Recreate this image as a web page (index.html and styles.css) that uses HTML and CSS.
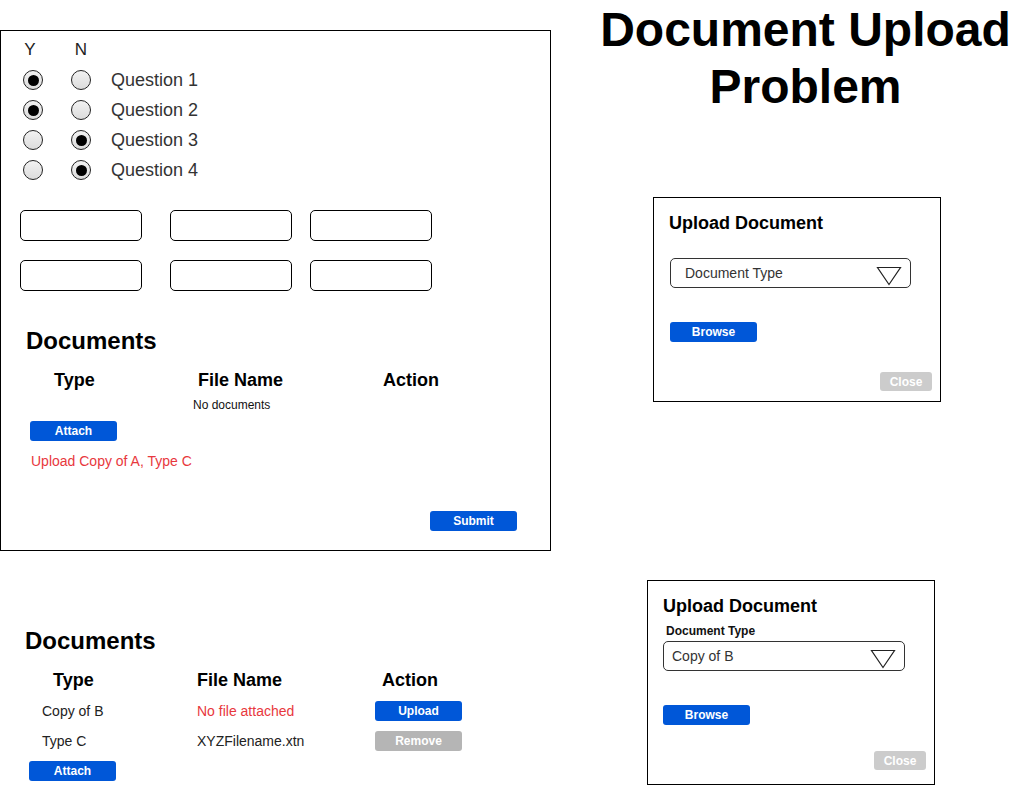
FILE: index.html
```html
<!DOCTYPE html>
<html>
<head>
<meta charset="utf-8">
<link rel="stylesheet" href="styles.css">
</head>
<body>
<div class="canvas">

  <section class="form-panel">
    <div class="questions">
      <span class="col-head col-y">Y</span><span class="col-head">N</span><span></span>
      <span class="radio on"></span><span class="radio"></span><span class="q">Question 1</span>
      <span class="radio on"></span><span class="radio"></span><span class="q">Question 2</span>
      <span class="radio"></span><span class="radio on"></span><span class="q">Question 3</span>
      <span class="radio"></span><span class="radio on"></span><span class="q">Question 4</span>
    </div>

    <div class="fields">
      <span class="field"></span><span class="field"></span><span class="field"></span>
      <span class="field"></span><span class="field"></span><span class="field"></span>
    </div>

    <div class="docs">
      <h2 class="docs-title">Documents</h2>
      <div class="doc-table">
        <div class="th th-type">Type</div>
        <div class="th th-file">File Name</div>
        <div class="th th-action">Action</div>
        <div class="empty-row"><span class="empty">No documents</span></div>
      </div>
      <button class="btn blue attach">Attach</button>
      <p class="warning">Upload Copy of A, Type C</p>
      <div class="submit-row"><button class="btn blue">Submit</button></div>
    </div>
  </section>

  <h1 class="page-title">Document Upload<br>Problem</h1>

  <section class="dialog dialog-one">
    <h3 class="dialog-title">Upload Document</h3>
    <div class="select select-one">
      <span class="select-text">Document Type</span>
      <svg class="caret" width="26" height="20" viewBox="0 0 26 20"><path d="M1.5 1.5 H24.5 L13 18.5 Z" fill="#fff" stroke="#222" stroke-width="1.2" stroke-linejoin="miter"/></svg>
    </div>
    <button class="btn blue browse">Browse</button>
    <div class="close-row"><button class="btn light">Close</button></div>
  </section>

  <section class="docs docs-bottom">
    <h2 class="docs-title">Documents</h2>
    <div class="doc-table">
      <div class="th th-type">Type</div>
      <div class="th th-file">File Name</div>
      <div class="th th-action">Action</div>

      <div class="td td-type">Copy of B</div>
      <div class="td td-file missing">No file attached</div>
      <div class="td td-action"><button class="btn blue">Upload</button></div>

      <div class="td td-type">Type C</div>
      <div class="td td-file">XYZFilename.xtn</div>
      <div class="td td-action"><button class="btn grey">Remove</button></div>
    </div>
    <button class="btn blue attach attach-bottom">Attach</button>
  </section>

  <section class="dialog dialog-two">
    <h3 class="dialog-title">Upload Document</h3>
    <div class="field-label">Document Type</div>
    <div class="select select-two">
      <span class="select-text">Copy of B</span>
      <svg class="caret" width="26" height="20" viewBox="0 0 26 20"><path d="M1.5 1.5 H24.5 L13 18.5 Z" fill="#fff" stroke="#222" stroke-width="1.2" stroke-linejoin="miter"/></svg>
    </div>
    <button class="btn blue browse browse-two">Browse</button>
    <div class="close-row close-two"><button class="btn light">Close</button></div>
  </section>

</div>
</body>
</html>
```

FILE: styles.css
```css
* { box-sizing: border-box; }
html, body { margin: 0; padding: 0; background: #fff; }
body {
  font-family: "Liberation Sans", Arial, sans-serif;
  color: #000;
  width: 1021px;
  height: 785px;
  overflow: hidden;
}
.canvas { position: relative; width: 1021px; height: 785px; }

/* ---------- main form panel ---------- */
.form-panel {
  position: absolute;
  left: 0;
  top: 30px;
  width: 551px;
  height: 521px;
  border: 1px solid #000;
  padding-top: 4px;
}
.questions {
  display: grid;
  grid-template-columns: 48px 41px auto;
  grid-auto-rows: 30px;
  align-items: center;
  padding-left: 22px;
}
.col-head {
  width: 20px;
  text-align: center;
  font-size: 17px;
  color: #222;
}
.col-y { margin-left: -3px; }
.radio {
  width: 20px;
  height: 20px;
  border-radius: 50%;
  border: 1px solid #222;
  background: linear-gradient(#f2f2f2, #dcdcdc);
  display: flex;
  align-items: center;
  justify-content: center;
}
.radio.on::after {
  content: "";
  width: 11px;
  height: 11px;
  border-radius: 50%;
  background: #000;
}
.q { font-size: 18px; color: #333; margin-left: -1px; }

.fields {
  display: grid;
  grid-template-columns: 150px 140px 121px;
  row-gap: 19px;
  padding-left: 19px;
  margin-top: 25px;
}
.field {
  width: 122px;
  height: 31px;
  border: 1px solid #000;
  border-radius: 5px;
}

/* ---------- documents ---------- */
.docs { padding-left: 25px; }
.form-panel .docs { margin-top: 36px; }
.docs-title {
  margin: 0;
  font-size: 24px;
  line-height: 28px;
  font-weight: bold;
}
.doc-table {
  display: grid;
  grid-template-columns: 172px 178px 1fr;
  margin-top: 12px;
}
.th {
  font-size: 18px;
  font-weight: bold;
  line-height: 26px;
}
.th-type { padding-left: 28px; }
.th-file { padding-left: 0; }
.th-action { padding-left: 7px; }
.empty-row {
  grid-column: 1 / -1;
  height: 24px;
  display: flex;
  align-items: center;
  padding-left: 167px;
}
.empty { font-size: 12px; color: #111; }

.btn {
  font-family: "Liberation Sans", Arial, sans-serif;
  font-size: 12px;
  font-weight: bold;
  color: #fff;
  border: none;
  border-radius: 3px;
  width: 87px;
  height: 20px;
  padding: 0;
  display: flex;
  align-items: center;
  justify-content: center;
}
.btn.blue { background: #0057d8; }
.btn.grey { background: #b5b5b5; }
.btn.light { background: #cccccc; width: 52px; height: 19px; }

.attach { margin-left: 4px; margin-top: 4px; }
.warning {
  margin: 10px 0 0 5px;
  font-size: 14px;
  line-height: 20px;
  color: #e8383d;
}
.submit-row {
  display: flex;
  justify-content: flex-end;
  margin-top: 40px;
  padding-right: 33px;
}

/* bottom documents block */
.docs-bottom {
  position: absolute;
  left: 0;
  top: 627px;
  width: 500px;
}
.docs-bottom .th { padding-bottom: 3px; line-height: 26px; height: 29px; }
.td {
  height: 30px;
  display: flex;
  align-items: center;
  font-size: 14px;
  color: #222;
}
.td-type { padding-left: 17px; }
.td.missing { color: #e8383d; }
.td-file { padding-left: 0; }
.attach-bottom { margin-top: 5px; }

/* ---------- title ---------- */
.page-title {
  position: absolute;
  left: 590px;
  top: 1px;
  width: 431px;
  margin: 0;
  text-align: center;
  font-size: 48px;
  line-height: 57px;
  font-weight: bold;
}

/* ---------- dialogs ---------- */
.dialog {
  position: absolute;
  border: 1px solid #000;
  background: #fff;
  padding-left: 15px;
}
.dialog-one { left: 653px; top: 197px; width: 288px; height: 205px; padding-top: 15px; }
.dialog-two { left: 647px; top: 580px; width: 288px; height: 205px; padding-top: 15px; }
.dialog-title {
  margin: 0;
  font-size: 18px;
  line-height: 20px;
  font-weight: bold;
}
.select {
  width: 241px;
  height: 30px;
  border: 1px solid #333;
  border-radius: 5px;
  display: flex;
  align-items: center;
  justify-content: space-between;
  padding-right: 8px;
}
.select-one { margin: 25px 0 0 1px; padding-left: 14px; }
.select-two { margin-top: 3px; padding-left: 8px; width: 242px; }
.select-text { font-size: 14px; color: #333; }
.caret { margin-top: 6px; }
.field-label {
  margin: 8px 0 0 3px;
  font-size: 12px;
  line-height: 14px;
  font-weight: bold;
  color: #111;
}
.browse { margin: 34px 0 0 1px; }
.browse-two { margin-left: 0; }
.close-row {
  display: flex;
  justify-content: flex-end;
  margin-top: 30px;
  padding-right: 8px;
}
.close-two { margin-top: 26px; }
```
